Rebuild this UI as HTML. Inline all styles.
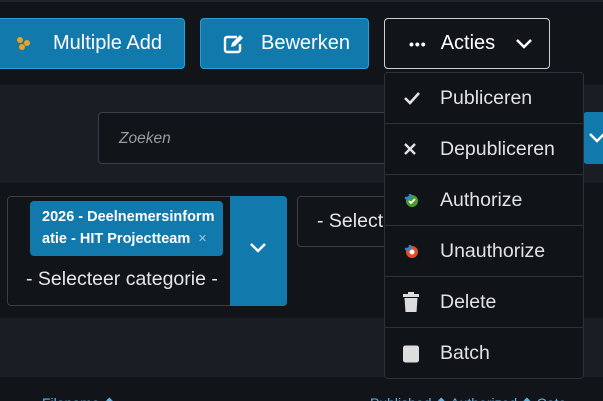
<!DOCTYPE html>
<html><head><meta charset="utf-8"><style>
*{box-sizing:border-box;margin:0;padding:0}
html,body{width:603px;height:401px;overflow:hidden}
body{background:#111419;font-family:"Liberation Sans",sans-serif;color:#e6e6e6;position:relative}
.abs{position:absolute}
.btn{position:absolute;top:18px;height:51px;background:#1279ad;border:1px solid #2b9ee0;border-radius:4px;color:#fff;font-size:20px;display:flex;align-items:center;white-space:nowrap}
.band{position:absolute;left:0;width:603px;background:#1a1d23}
.menu{position:absolute;left:384px;top:72px;width:200px;height:307px;background:#101318;border:1px solid #2d3139;border-radius:4px}
.item{height:51px;border-bottom:1px solid #2d3139;display:flex;align-items:center;font-size:19.5px;color:#e2e2e2;padding-left:55px;position:relative}
.item:last-child{border-bottom:none}
.ic{position:absolute;left:18px;top:50%;transform:translateY(-50%)}
</style></head><body>
<div class="abs" style="left:0;top:0;width:603px;height:2px;background:#1f232a"></div>
<div class="band" style="top:85px;height:98px"></div>
<div class="band" style="top:318px;height:59px"></div>

<div class="btn" style="left:-5px;width:190px;padding-left:20px">
<svg width="16" height="16" viewBox="0 0 16 16" style="margin-right:21px"><circle cx="4" cy="4" r="3" fill="#f0a020"/><circle cx="11" cy="7" r="3" fill="#f0a020"/><circle cx="6" cy="11" r="3" fill="#f0a020"/></svg>Multiple Add</div>
<div class="btn" style="left:200px;width:169px;padding-left:22px">
<svg width="22" height="20" viewBox="0 0 22 20" style="margin-right:16px"><path d="M14 3H4a2 2 0 0 0-2 2v11a2 2 0 0 0 2 2h11a2 2 0 0 0 2-2V10" fill="none" stroke="#fff" stroke-width="2.4"/><path d="M8 13l1-4 8-8 3 3-8 8z" fill="#fff"/></svg>Bewerken</div>
<div class="btn" style="left:384px;width:166px;background:#111419;border-color:#d0d0d0;padding-left:24px">
<span style="font-size:14px;letter-spacing:1px;margin-right:14px;font-weight:bold">•••</span>Acties
<svg width="18" height="12" viewBox="0 0 18 12" style="margin-left:20px"><path d="M2 2l7 7 7-7" fill="none" stroke="#fff" stroke-width="2.5"/></svg></div>

<div class="abs" style="left:98px;top:112px;width:310px;height:52px;border:1px solid #3a3e46;border-radius:4px;background:#111419;font-style:italic;color:#9a9ca0;font-size:15.5px;padding:17px 0 0 20px">Zoeken</div>
<div class="abs" style="left:583px;top:112px;width:30px;height:52px;background:#1279ad;border-radius:4px"><svg width="18" height="12" viewBox="0 0 18 12" style="position:absolute;left:5px;top:20px"><path d="M2 2l7 7 7-7" fill="none" stroke="#fff" stroke-width="2.5"/></svg></div>

<div class="abs" style="left:7px;top:196px;width:280px;height:110px;border:1px solid #3a3e46;border-radius:4px;background:#111419"></div>
<div class="abs" style="left:230px;top:196px;width:57px;height:110px;background:#1279ad;border-radius:0 4px 4px 0"><svg width="18" height="12" viewBox="0 0 18 12" style="position:absolute;left:19px;top:46px"><path d="M2 2l7 7 7-7" fill="none" stroke="#fff" stroke-width="2.5"/></svg></div>
<div class="abs" style="left:30px;top:201px;width:193px;height:55px;background:#1279ad;border-radius:4px;color:#fff;font-weight:bold;font-size:14.5px;line-height:22px;padding:5px 0 0 12px;white-space:nowrap;overflow:hidden">2026 - Deelnemersinform<br>atie - HIT Projectteam <span style="color:#9ac8e0;font-weight:normal;margin-left:4px">×</span></div>
<div class="abs" style="left:26px;top:268px;font-size:19.5px;color:#e6e6e6;white-space:nowrap">- Selecteer categorie -</div>

<div class="abs" style="left:297px;top:196px;width:100px;height:51px;border:1px solid #3a3e46;border-radius:4px;background:#111419;font-size:19.5px;padding:13px 0 0 19px;white-space:nowrap;overflow:hidden">- Selecte</div>

<div class="abs" style="left:42px;top:395px;font-size:14px;color:#5eb6e8">Filename ⬆</div>
<div class="abs" style="left:370px;top:395px;font-size:14px;color:#5eb6e8;white-space:nowrap">Published ⬆ Authorized ⬆ Cate</div>

<div class="menu">
<div class="item"><svg class="ic" width="18" height="14" viewBox="0 0 18 14"><path d="M2 7l5 5 9-10" fill="none" stroke="#e2e2e2" stroke-width="2.6"/></svg>Publiceren</div>
<div class="item"><svg class="ic" width="14" height="14" viewBox="0 0 14 14"><path d="M2 2l10 10M12 2L2 12" stroke="#e2e2e2" stroke-width="2.4"/></svg>Depubliceren</div>
<div class="item"><svg class="ic" width="16" height="16" viewBox="0 0 16 16"><circle cx="9" cy="9" r="6" fill="#4a9a2c"/><path d="M6 9l2 2 4-4" fill="none" stroke="#fff" stroke-width="1.8"/><path d="M2 6h5V2" fill="none" stroke="#2a8ad8" stroke-width="2.5"/></svg>Authorize</div>
<div class="item"><svg class="ic" width="16" height="16" viewBox="0 0 16 16"><circle cx="9" cy="9" r="6" fill="#e0502a"/><circle cx="9" cy="9" r="2.5" fill="#fff"/><path d="M2 6h5V2" fill="none" stroke="#2a8ad8" stroke-width="2.5"/></svg>Unauthorize</div>
<div class="item"><svg class="ic" width="16" height="20" viewBox="0 0 16 20"><rect x="0" y="2" width="16" height="3" fill="#ddd"/><rect x="5" y="0" width="6" height="3" fill="#ddd"/><path d="M1.5 6h13l-1 14h-11z" fill="#ddd"/></svg>Delete</div>
<div class="item"><svg class="ic" width="16" height="17" viewBox="0 0 16 17"><rect x="0" y="0" width="16" height="17" rx="2.5" fill="#ddd"/></svg>Batch</div>
</div>
</body></html>
